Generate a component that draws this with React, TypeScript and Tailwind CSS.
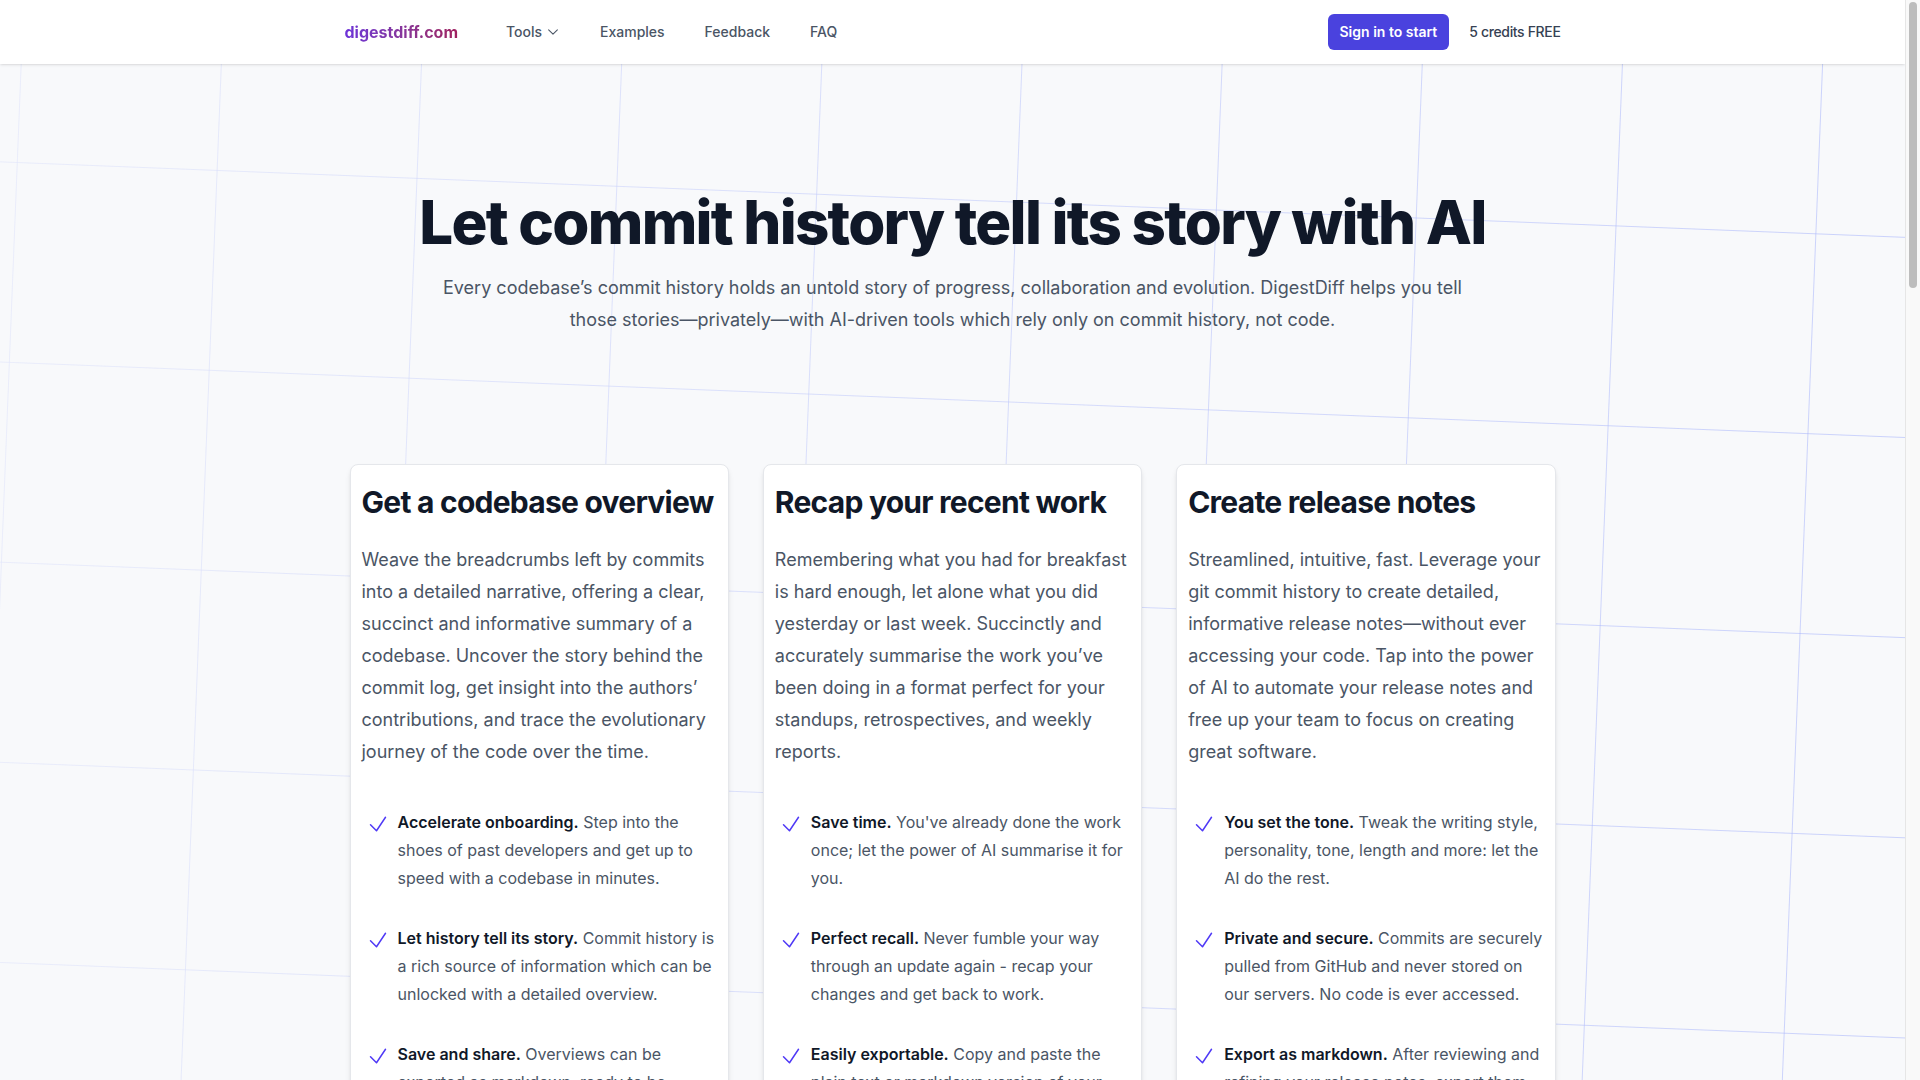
import React from "react";

interface Feature {
  title: string;
  text: string;
}

interface CardProps {
  title: string;
  body: string;
  features: Feature[];
}

const cards: CardProps[] = [
  {
    title: "Get a codebase overview",
    body: "Weave the breadcrumbs left by commits into a detailed narrative, offering a clear, succinct and informative summary of a codebase. Uncover the story behind the commit log, get insight into the authors’ contributions, and trace the evolutionary journey of the code over the time.",
    features: [
      {
        title: "Accelerate onboarding.",
        text: "Step into the shoes of past developers and get up to speed with a codebase in minutes.",
      },
      {
        title: "Let history tell its story.",
        text: "Commit history is a rich source of information which can be unlocked with a detailed overview.",
      },
      {
        title: "Save and share.",
        text: "Overviews can be exported as markdown, ready to be shared with your team or added to your docs.",
      },
    ],
  },
  {
    title: "Recap your recent work",
    body: "Remembering what you had for breakfast is hard enough, let alone what you did yesterday or last week. Succinctly and accurately summarise the work you’ve been doing in a format perfect for your standups, retrospectives, and weekly reports.",
    features: [
      {
        title: "Save time.",
        text: "You've already done the work once; let the power of AI summarise it for you.",
      },
      {
        title: "Perfect recall.",
        text: "Never fumble your way through an update again - recap your changes and get back to work.",
      },
      {
        title: "Easily exportable.",
        text: "Copy and paste the plain text or markdown version of your recap wherever you need it.",
      },
    ],
  },
  {
    title: "Create release notes",
    body: "Streamlined, intuitive, fast. Leverage your git commit history to create detailed, informative release notes—without ever accessing your code. Tap into the power of AI to automate your release notes and free up your team to focus on creating great software.",
    features: [
      {
        title: "You set the tone.",
        text: "Tweak the writing style, personality, tone, length and more: let the AI do the rest.",
      },
      {
        title: "Private and secure.",
        text: "Commits are securely pulled from GitHub and never stored on our servers. No code is ever accessed.",
      },
      {
        title: "Export as markdown.",
        text: "After reviewing and refining your release notes, export them as markdown ready to publish.",
      },
    ],
  },
];

function CheckIcon({ className }: { className?: string }) {
  return (
    <svg
      viewBox="0 0 24 24"
      fill="none"
      stroke="currentColor"
      strokeWidth={1.5}
      className={className}
      aria-hidden="true"
    >
      <path strokeLinecap="round" strokeLinejoin="round" d="m4.5 12.75 6 6 9-13.5" />
    </svg>
  );
}

function ChevronDown({ className }: { className?: string }) {
  return (
    <svg
      viewBox="0 0 24 24"
      fill="none"
      stroke="currentColor"
      strokeWidth={1.8}
      className={className}
      aria-hidden="true"
    >
      <path strokeLinecap="round" strokeLinejoin="round" d="m19.5 8.25-7.5 7.5-7.5-7.5" />
    </svg>
  );
}

// tilted grid in the page background, fading out towards the left
function GridBackground() {
  return (
    <svg className="pointer-events-none absolute inset-0 h-full w-full" aria-hidden="true">
      <defs>
        <pattern
          id="grid"
          width="200"
          height="200"
          patternUnits="userSpaceOnUse"
          patternTransform="rotate(2.27) translate(23.2 161.2)"
        >
          <path d="M200 0H0V200" fill="none" stroke="#9eacfb" strokeWidth="1" />
        </pattern>
        <linearGradient id="fade" x1="0" y1="0" x2="1" y2="0">
          <stop offset="0" stopColor="#fff" stopOpacity="0.3" />
          <stop offset="0.45" stopColor="#fff" stopOpacity="0.7" />
          <stop offset="1" stopColor="#fff" stopOpacity="1" />
        </linearGradient>
        <mask id="gridMask">
          <rect width="100%" height="100%" fill="url(#fade)" />
        </mask>
      </defs>
      <rect width="100%" height="100%" fill="url(#grid)" mask="url(#gridMask)" />
    </svg>
  );
}

function Card({ title, body, features }: CardProps) {
  return (
    <div className="rounded-lg border border-gray-200 bg-white px-[11px] pt-[19px] pb-10 shadow-md">
      <h2 className="text-3xl leading-9 font-bold tracking-tight text-gray-900">{title}</h2>
      <p className="mt-6 text-lg leading-8 text-gray-600">{body}</p>
      <dl className="mt-10 space-y-8 text-base leading-7 text-gray-600">
        {features.map((f) => (
          <div key={f.title} className="relative pl-9">
            <dt className="inline font-semibold text-gray-900">
              <CheckIcon className="absolute top-1 left-1 h-6 w-6 text-indigo-600" />
              {f.title}
            </dt>{" "}
            <dd className="inline">{f.text}</dd>
          </div>
        ))}
      </dl>
    </div>
  );
}

export default function App() {
  return (
    <div
      className="flex h-screen overflow-hidden bg-[#f8f9fb]"
      style={{ fontFamily: "Inter, 'Noto Sans', sans-serif" }}
    >
      <div className="relative min-w-0 flex-1 overflow-hidden pb-24">
        <GridBackground />

        <header className="relative z-10 bg-white shadow-sm">
          <nav className="mx-auto flex h-16 max-w-7xl items-center justify-between px-8">
            <div className="flex items-center gap-12">
              <a className="bg-linear-to-r from-[#6d32d8] to-[#a0205f] bg-clip-text text-base font-bold text-transparent">
                digestdiff.com
              </a>
              <div className="flex items-center gap-10 text-sm font-medium text-gray-600">
                <span className="flex items-center gap-1">
                  Tools
                  <ChevronDown className="h-3.5 w-3.5" />
                </span>
                <span>Examples</span>
                <span>Feedback</span>
                <span>FAQ</span>
              </div>
            </div>
            <div className="flex items-center gap-5">
              <button
                type="button"
                className="rounded-md bg-[#4a42de] px-3 py-2 text-sm font-semibold text-white"
              >
                Sign in to start
              </button>
              <span className="text-sm font-medium tracking-tight text-gray-700">
                5 credits FREE
              </span>
            </div>
          </nav>
        </header>

        <main className="relative z-10 px-8">
          <section className="pt-[128px] text-center">
            <h1 className="text-6xl leading-none font-extrabold tracking-[-0.029em] text-gray-900">
              Let commit history tell its story with AI
            </h1>
            <p className="mx-auto mt-5 max-w-5xl text-lg leading-8 text-gray-600">
              Every codebase’s commit history holds an untold story of progress, collaboration and
              evolution. DigestDiff helps you tell those stories—privately—with AI-driven tools
              which rely only on commit history, not code.
            </p>
          </section>

          <section className="mx-auto mt-32 grid max-w-[1206px] grid-cols-3 gap-[34px]">
            {cards.map((c) => (
              <Card key={c.title} {...c} />
            ))}
          </section>
        </main>
      </div>

      {/* browser scrollbar */}
      <aside className="w-[15px] shrink-0 border-l border-[#e6e6e6] bg-[#f9f9f9] px-[3px] pt-[2px]">
        <div className="h-[286px] rounded-full bg-[#bdbdbd]" />
      </aside>
    </div>
  );
}
